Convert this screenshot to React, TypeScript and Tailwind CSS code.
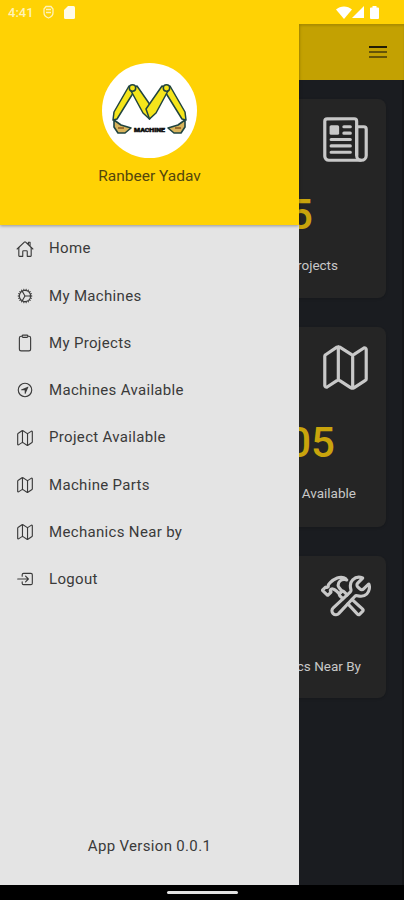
import type { IconType } from 'react-icons';
import {
  IoClipboardOutline,
  IoCogOutline,
  IoConstructOutline,
  IoEnterOutline,
  IoHomeOutline,
  IoMapOutline,
  IoNavigateCircleOutline,
  IoNewspaperOutline,
} from 'react-icons/io5';

const menuItems: { label: string; icon: IconType }[] = [
  { label: 'Home', icon: IoHomeOutline },
  { label: 'My Machines', icon: IoCogOutline },
  { label: 'My Projects', icon: IoClipboardOutline },
  { label: 'Machines Available', icon: IoNavigateCircleOutline },
  { label: 'Project Available', icon: IoMapOutline },
  { label: 'Machine Parts', icon: IoMapOutline },
  { label: 'Mechanics Near by', icon: IoMapOutline },
  { label: 'Logout', icon: IoEnterOutline },
];

function StatusBar() {
  return (
    <div className="flex h-6 shrink-0 items-center bg-[#ffd204] pl-2 pr-[25px] text-[#fffbe8]">
      <span className="w-[35px] text-[13px] font-medium leading-none text-[#fff3b8]">4:41</span>
      <svg width="11" height="14" viewBox="0 0 11 14" fill="none" stroke="currentColor" strokeWidth="1.3" opacity="0.8">
        <path d="M1 4 3 1.500h5L10 4v3.800c0 2.500-2 4.300-4.500 5.200C3 12.100 1 10.300 1 7.800z" />
        <path d="M3 4.500h5M3 7.500h5" />
      </svg>
      <svg className="ml-[10px]" width="11" height="13" viewBox="0 0 11 13" fill="currentColor">
        <path d="M4 0h5.500A1.500 1.500 0 0 1 11 1.500v10A1.500 1.500 0 0 1 9.500 13h-8A1.500 1.500 0 0 1 0 11.500V4z" />
      </svg>
      <div className="ml-auto flex items-center text-white">
        <svg width="16" height="13" viewBox="0 0 16 13" fill="currentColor">
          <path d="M0 3.500C4.500-.4 11.500-.4 16 3.500L8 13z" />
        </svg>
        <svg width="12" height="12" viewBox="0 0 12 12" fill="currentColor">
          <path d="M12 0v12H0z" />
        </svg>
        <svg className="ml-[6px]" width="9" height="13" viewBox="0 0 9 13" fill="currentColor">
          <path d="M2.500 0h4v1.500H8a1 1 0 0 1 1 1V12a1 1 0 0 1-1 1H1a1 1 0 0 1-1-1V2.500a1 1 0 0 1 1-1h1.500z" />
        </svg>
      </div>
    </div>
  );
}

// two excavator arms forming an M
function Logo() {
  return (
    <svg width="95" height="95" viewBox="0 0 95 95">
      <circle cx="47.500" cy="47.500" r="47.500" fill="#fff" />
      <g fill="#f5e51b" stroke="#21443f" strokeWidth="1.500" strokeLinejoin="round">
        <path d="M27 23 33 27 15 56 11 57 12 49z" />
        <path d="M68 23 62 27 80 56 84 57 83 49z" />
        <path d="M28 26 35 23 51 46 47.500 56 41 50z" />
        <path d="M67 26 60 23 44 46 47.500 56 54 50z" />
        <circle cx="30.500" cy="25" r="3.200" />
        <circle cx="64.500" cy="25" r="3.200" />
      </g>
      <g fill="#d9b45c" stroke="#21443f" strokeWidth="1.600" strokeLinejoin="round">
        <path d="M12 57 12 64 16 70 23 70 29 65 19 62z" />
        <path d="M83 57 83 64 79 70 72 70 66 65 76 62z" />
      </g>
      <path d="M16 65h6M73 65h6" stroke="#8a5a1e" strokeWidth="1.500" />
      <text x="47.500" y="69" textAnchor="middle" textLength="31" lengthAdjust="spacingAndGlyphs" fontSize="5.500" fontWeight="900" fill="#111" stroke="#111" strokeWidth="0.500">
        MACHINE
      </text>
    </svg>
  );
}

function Drawer() {
  return (
    <aside className="absolute left-0 top-0 flex h-full w-[299px] flex-col bg-[#e4e4e4] text-[#3a3a3a]">
      <div className="flex h-[201px] flex-col items-center bg-[#ffd204] pt-[39px] shadow-[0_1px_3px_rgba(0,0,0,0.35)]">
        <Logo />
        <h2 className="mt-2 text-[15.5px] leading-5 text-[#54470c]">Ranbeer Yadav</h2>
      </div>
      <nav>
        {menuItems.map(({ label, icon: Icon }) => (
          <a key={label} className="flex h-[47.25px] items-center gap-[15px] pl-4">
            <Icon className="size-[18px]" />
            <span className="text-[15px] tracking-[0.33px]">{label}</span>
          </a>
        ))}
      </nav>
      <p className="mt-auto pb-[28px] text-center text-[15px] leading-[22px] tracking-[0.33px]">App Version 0.0.1</p>
    </aside>
  );
}

export default function App() {
  return (
    <div className="flex h-[900px] w-[404px] flex-col overflow-hidden bg-black font-[Roboto,sans-serif]">
      <StatusBar />
      <div className="relative h-[861px] overflow-hidden bg-[#1a1c20]">
        <header className="flex h-14 items-center justify-end bg-[#c3a102] pr-[17px] shadow-[inset_0_2px_2px_rgba(0,0,0,0.12)]">
          <svg width="18" height="14" viewBox="0 0 18 14" strokeWidth="2">
            <path d="M0 2h18" stroke="#211c05" />
            <path d="M0 7h18" stroke="#655407" />
            <path d="M0 12h18" stroke="#655407" />
          </svg>
        </header>
        <main className="flex h-[805px] flex-col gap-[29px] border-r-2 border-[#141518] pl-[18px] pr-4 pt-[19px] text-[#c8c8c8]">
          <section className="flex h-[199px] flex-col rounded-lg bg-[#252525] pr-[15px] pt-[15px] shadow">
            <IoNewspaperOutline className="size-[51px] self-end" />
            <div className="mt-[25px] flex flex-col pr-[33px] text-right">
              <span className="pr-[25px] text-[42px] font-medium leading-[50px] text-[#c9a40c]">05</span>
              <span className="mt-[15px] text-[13.5px] leading-5">My Projects</span>
            </div>
          </section>
          <section className="flex h-[200px] flex-col rounded-lg bg-[#252525] pr-[15px] pt-[15px] shadow">
            <IoMapOutline className="size-[51px] self-end" />
            <div className="mt-[25px] flex flex-col pr-[15px] text-right">
              <span className="pr-[21px] text-[42px] font-medium leading-[50px] text-[#c9a40c]">05</span>
              <span className="mt-[15px] text-[13.5px] leading-5">Machines Available</span>
            </div>
          </section>
          <section className="flex h-[142px] flex-col rounded-lg bg-[#252525] pr-[15px] pt-[15px] shadow">
            <IoConstructOutline className="size-[50px] self-end" />
            <span className="mt-[35px] pr-[10px] text-right text-[13.5px] leading-5">Mechanics Near By</span>
          </section>
        </main>
        <Drawer />
      </div>
      <div className="flex flex-1 items-center justify-center">
        <div className="h-[3px] w-[71px] rounded-full bg-[#e2e2e2]" />
      </div>
    </div>
  );
}
